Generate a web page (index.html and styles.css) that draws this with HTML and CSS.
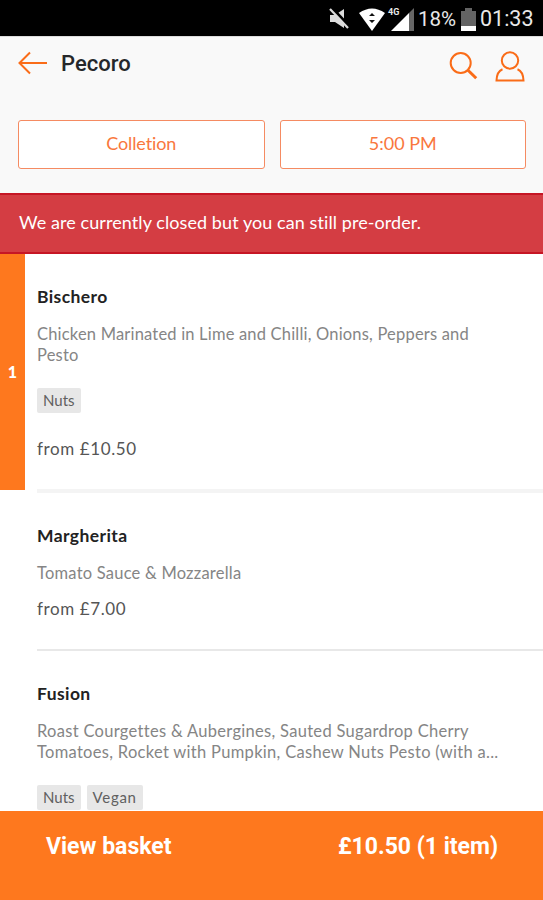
FILE: index.html
```
<!DOCTYPE html>
<html lang="en">
<head>
<meta charset="utf-8">
<title>Pecoro</title>
<link rel="stylesheet" href="styles.css">
</head>
<body>
<div class="app">
  <div class="status">
    <svg class="mute" width="22" height="24" viewBox="0 0 22 24"><path d="M1 8h5l9-6v19l-9-6H1z" fill="#ddd"/><path d="M2 0l19 20" stroke="#000" stroke-width="3"/><path d="M1 2l18 19" stroke="#ddd" stroke-width="2.2"/></svg>
    <svg class="wifi" width="26" height="23" viewBox="0 0 26 23"><path d="M0 5Q13-4 26 5L13 23z" fill="#fff"/><path d="M10 8l3-3 3 3zM10 12l3 3 3-3z" fill="#111"/></svg>
    <div class="signal">
      <svg width="23" height="23" viewBox="0 0 23 23"><path d="M18 5l5-5v23h-5z" fill="#666"/><path d="M0 23L18 5v18z" fill="#fff"/></svg>
      <span class="net">4G</span>
    </div>
    <span class="percent">18%</span>
    <svg class="battery" width="15" height="23" viewBox="0 0 15 23"><path d="M4 0h7v3h4v20H0V3h4z" fill="#646464"/><path d="M0 18h15v5H0z" fill="#fff"/></svg>
    <span class="clock">01:33</span>
  </div>
  <header class="header">
    <div class="titlebar">
      <svg class="back" width="30" height="24" viewBox="0 0 30 24"><path d="M29 12H1.5M12 1.5L1.5 12L12 22.500" fill="none" stroke="#fa6c18" stroke-width="2"/></svg>
      <h1 class="title">Pecoro</h1>
      <svg class="search" width="30" height="30" viewBox="0 0 30 30"><circle cx="11.700" cy="12" r="10" fill="none" stroke="#fa6c18" stroke-width="2"/><path d="M19 19.200l8.200 8" stroke="#fa6c18" stroke-width="3"/></svg>
      <svg class="user" width="30" height="31" viewBox="0 0 30 31"><circle cx="15" cy="9.500" r="8.200" fill="none" stroke="#fa6c18" stroke-width="2"/><path d="M7.500 18.200Q1.800 20.500 1.500 29.500h27Q28.200 20.500 22.500 18.200" fill="none" stroke="#fa6c18" stroke-width="2"/></svg>
    </div>
    <div class="options">
      <button class="option"><span class="collection">Colletion</span></button>
      <button class="option"><span class="time">5:00 PM</span></button>
    </div>
  </header>
  <div class="notice"><span>We are currently closed but you can still pre-order.</span></div>
  <main class="menu">
    <article class="item selected">
      <div class="count">1</div>
      <div class="body">
        <h2 class="name n1">Bischero</h2>
        <p class="desc d1">Chicken Marinated in Lime and Chilli, Onions, Peppers and<br>Pesto</p>
        <div class="tags"><span class="tag">Nuts</span></div>
        <p class="price">from £10.50</p>
      </div>
    </article>
    <article class="item">
      <div class="body second">
        <h2 class="name n2">Margherita</h2>
        <p class="desc d2">Tomato Sauce &amp; Mozzarella</p>
        <p class="price">from £7.00</p>
      </div>
    </article>
    <article class="item">
      <div class="body third">
        <h2 class="name n3">Fusion</h2>
        <p class="desc"><span class="d3">Roast Courgettes &amp; Aubergines, Sauted Sugardrop Cherry</span><br><span class="d4">Tomatoes, Rocket with Pumpkin, Cashew Nuts Pesto (with a...</span></p>
        <div class="tags"><span class="tag">Nuts</span><span class="tag vegan">Vegan</span></div>
      </div>
    </article>
  </main>
  <footer class="basket"><span>View basket</span><span>£10.50 (1 item)</span></footer>
</div>
</body>
</html>
```
FILE: styles.css
```
* { box-sizing: border-box; }
body { margin: 0; font-family: Lato, "Open Sans", sans-serif; font-variant-ligatures: none; background: #fff; }
h1, h2, p { margin: 0; }
svg { display: block; flex: none; }
.app { width: 543px; height: 900px; overflow: hidden; display: flex; flex-direction: column; }
.status { height: 36px; flex: none; background: #000; color: #e8e8e8; display: flex; align-items: center; padding: 2px 0 0 329px; font: 21.5px/34px Roboto, sans-serif; white-space: nowrap; }
.wifi { margin-left: 8px; }
.signal { position: relative; margin-left: 6px; }
.net { position: absolute; left: -3px; top: -1px; font-size: 9px; line-height: 10px; font-weight: 700; }
.percent { width: 37px; margin-left: 4px; font-size: 20.5px; }
.battery { margin-left: 6px; }
.clock { margin-left: 4px; }
.header { height: 157px; flex: none; background: #f9f9f9; border-top: 1px solid #ddd; }
.titlebar { height: 54px; display: flex; align-items: center; padding: 0 18px; }
.back { margin-top: -2px; }
.title { flex: 1; margin-left: 13px; font: 500 22px/30px Roboto, sans-serif; color: #25272a; }
.search { margin: 4px 16px 0 0; }
.user { margin-top: 5px; }
.options { display: grid; grid-template-columns: 1fr 1fr; gap: 15px; padding: 29px 17px 0 18px; }
.option { height: 49px; padding: 0 0 4px; border: 1.5px solid #f58b62; border-radius: 3px; background: #fff; color: #f9773d; font: 18px/24px Lato, sans-serif; font-variant-ligatures: none; }
.collection { letter-spacing: -0.1px; }
.notice { height: 61px; flex: none; background: #d43d43; border-top: 2px solid #c61625; border-bottom: 2px solid #c61625; color: #fff; font-size: 18px; line-height: 55px; letter-spacing: 0.08px; padding-left: 19px; white-space: nowrap; }
.menu { flex: 1; min-height: 0; overflow: hidden; }
.item { display: flex; padding-left: 37px; }
.selected { padding-left: 0; }
.count { width: 25px; height: 236px; flex: none; margin-right: 12px; background: #fe781e; color: #fff; font-weight: 900; font-size: 16px; line-height: 236px; text-align: center; }
.body { flex: 1; height: 239px; padding-top: 31px; border-bottom: 4px solid #f4f4f4; white-space: nowrap; }
.second { height: 158px; border-bottom: 2px solid #e8e8e8; }
.third { border: 0; }
.name { font-size: 17.5px; line-height: 24px; font-weight: 700; color: #222; letter-spacing: 0.4px; }
.desc { margin-top: 15px; font-size: 16.5px; line-height: 20.5px; color: #858585; }
.d1 { letter-spacing: 0.19px; }
.d2 { letter-spacing: 0.22px; }
.d3 { letter-spacing: 0.3px; }
.d4 { letter-spacing: 0.3px; }
.tags { display: flex; gap: 6px; margin-top: 23px; }
.tag { height: 25px; padding: 0 6px; border-radius: 2px; background: #e7e7e7; color: #606060; font-size: 15px; line-height: 24px; }
.vegan { letter-spacing: 0.7px; }
.price { margin-top: 24px; font-size: 17px; line-height: 24px; color: #555; letter-spacing: 0.6px; }
.second .price { margin-top: 13px; }
.basket { height: 89px; flex: none; background: #fe781e; color: #fff; display: flex; justify-content: space-between; padding: 20px 45px 0 46px; font: 700 23px/32px Roboto, sans-serif; }
```
